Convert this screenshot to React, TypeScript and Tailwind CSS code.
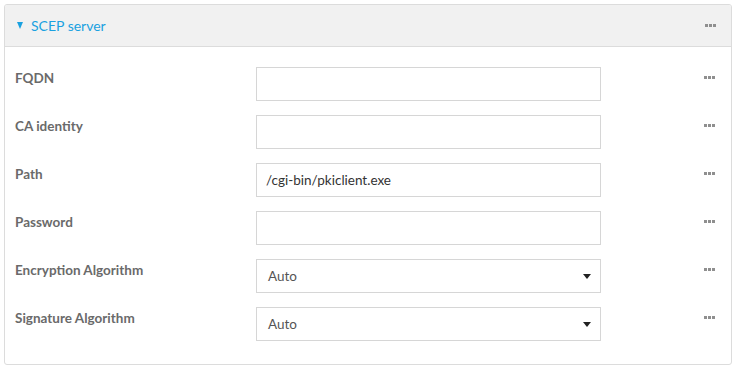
import React from "react";

function Dots() {
  return (
    <div className="flex gap-px">
      <span className="h-[3px] w-[3px] bg-[#8f8f8f]" />
      <span className="h-[3px] w-[3px] bg-[#8f8f8f]" />
      <span className="h-[3px] w-[3px] bg-[#8f8f8f]" />
    </div>
  );
}

const rows: { label: string; value?: string; select?: boolean }[] = [
  { label: "FQDN" },
  { label: "CA identity" },
  { label: "Path", value: "/cgi-bin/pkiclient.exe" },
  { label: "Password" },
  { label: "Encryption Algorithm", value: "Auto", select: true },
  { label: "Signature Algorithm", value: "Auto", select: true },
];

export default function App() {
  return (
    <div className="h-[368px] w-[735px] bg-white p-1 font-['Lato','Open_Sans',sans-serif]">
      <div className="w-[728px] overflow-hidden rounded-[3px] border border-[#dcdcdc]">
        {/* Header */}
        <div className="flex h-[42px] items-center justify-between border-b border-[#dcdcdc] bg-[#f1f1f1] pl-3 pr-[15px]">
          <div className="flex items-center gap-2 text-[14px] text-[#1aa1e0]">
            <span className="h-0 w-0 border-x-[3.5px] border-t-[7px] border-x-transparent border-t-[#1aa1e0]" />
            <span>SCEP server</span>
          </div>
          <Dots />
        </div>

        {/* Body */}
        <div className="flex flex-col gap-[14px] pb-[23px] pt-5">
          {rows.map((r) => (
            <div key={r.label} className="flex items-start">
              <div className="mt-px w-[251px] pl-[10px] text-[13.5px] font-bold leading-5 text-[#6a6a6a]">{r.label}</div>
              <div className="flex h-[34px] w-[345px] items-center justify-between border border-[#d6d6d6] bg-white pl-[9px] pr-[9px] text-[13.5px]">
                <span className={r.select ? "pl-[2px] text-[#555]" : "text-[#333]"}>{r.value ?? ""}</span>
                {r.select && (
                  <span className="h-0 w-0 border-x-[4px] border-t-[5px] border-x-transparent border-t-[#222]" />
                )}
              </div>
              <div className="ml-[103px] mt-[9px]">
                <Dots />
              </div>
            </div>
          ))}
        </div>
      </div>
    </div>
  );
}
